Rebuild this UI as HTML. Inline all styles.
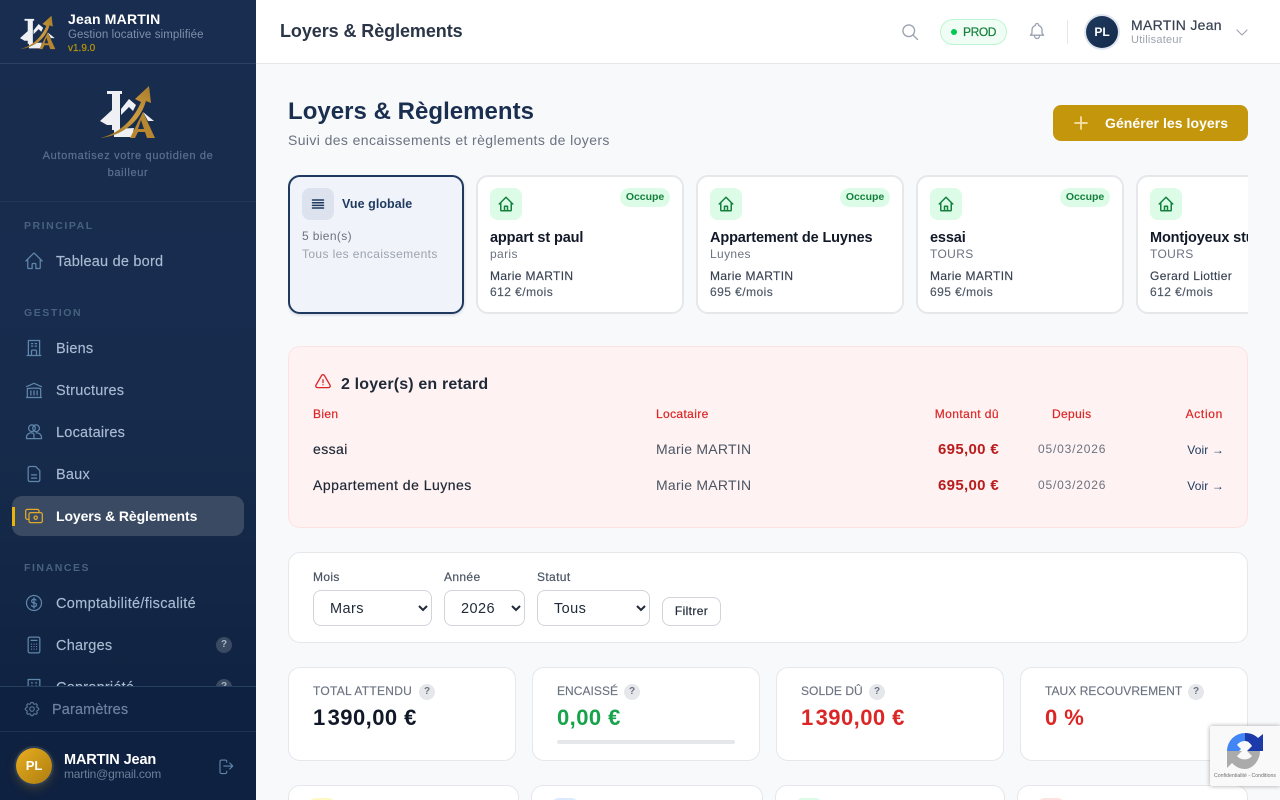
<!DOCTYPE html>
<html lang="fr"><head><meta charset="utf-8"><title>Loyers &amp; Règlements</title>
<style>
*{box-sizing:border-box}
html,body{margin:0;padding:0;width:1280px;height:800px;overflow:hidden;background:#f8f9fb;font-family:"Liberation Sans",sans-serif}
#root{position:relative;width:1280px;height:800px;overflow:hidden;background:#f8f9fb}
.t{position:absolute;white-space:nowrap;line-height:20px;height:20px;letter-spacing:.03em}
.r{text-align:right}
.b{position:absolute}
.m{-webkit-text-stroke:.2px currentColor}
svg{position:absolute;fill:none;stroke:currentColor;stroke-linecap:round;stroke-linejoin:round}
svg.logo{stroke:none}
#side{position:absolute;left:0;top:0;width:256px;height:800px;background:linear-gradient(180deg,#182d4f 0%,#172c4d 50%,#0e1f3d 100%);overflow:hidden}
#side .nav{color:#a9bbd2;font-size:14.5px;letter-spacing:.22px;-webkit-text-stroke:.15px currentColor}
#side .sec{color:#47617f;font-size:10.5px;font-weight:bold;letter-spacing:1.55px}
#side svg.i{color:#5f86ab;width:20px;height:20px;left:24px;stroke-width:1.5}
.help{position:absolute;width:16px;height:16px;border-radius:50%;text-align:center;font-size:10px;line-height:16px;font-weight:bold}
.card{position:absolute;top:175px;height:139px;width:208px;background:#fff;border:2px solid #e5e7eb;border-radius:12px}
.ci{position:absolute;top:11px;left:12px;width:32px;height:32px;border-radius:8px;background:#dcfce7;color:#15803d}
.ci svg{left:7px;top:7px;width:18px;height:18px;stroke-width:2}
.bd{position:absolute;top:11px;right:12px;width:50px;height:19px;border-radius:10px;background:#dcfce7;color:#15803d;font-size:10.5px;font-weight:bold;line-height:19px;text-align:center;letter-spacing:-.05px}
.c1{left:12px;top:51px;font-size:14.5px;font-weight:bold;color:#111827;letter-spacing:-.13px}
.c2{left:12px;top:67px;font-size:12px;color:#6b7280}
.c3{left:12px;top:89px;font-size:12px;color:#374151;-webkit-text-stroke:.15px currentColor}
.c4{left:12px;top:105px;font-size:12px;color:#4b5563;letter-spacing:.45px;-webkit-text-stroke:.15px currentColor}
.kpi{position:absolute;top:667px;height:94px;width:228px;background:#fff;border:1px solid #e5e7eb;border-radius:12px}
.kl{left:24px;top:13px;font-size:12px;color:#6b7280;letter-spacing:.05px;-webkit-text-stroke:.15px currentColor}
.kv{left:24px;top:40px;font-size:22px;font-weight:bold;line-height:20px;letter-spacing:.45px}
.kq{background:#e5e7eb;color:#6b7280;top:16px}
.th{letter-spacing:-4.2px}
select{position:absolute;top:590px;height:36px;background:#fff;border:1px solid #d1d5db;border-radius:8px;font:14.5px "Liberation Sans",sans-serif;color:#1f2937;padding:2px 0 0 12px;letter-spacing:.03em}
.bot{position:absolute;top:785px;height:40px;background:#fff;border:1px solid #e5e7eb;border-radius:12px}
.bot i{position:absolute;left:19px;top:12px;width:28px;height:28px;border-radius:8px}
</style></head><body>
<div id="root">
<div id="side">
<svg class="logo" style="left:20px;top:15px;width:36px;height:36px" viewBox="0 0 56 56"><defs><linearGradient id="g1" x1="0" y1="1" x2="1" y2="0"><stop offset="0" stop-color="#96701f"/><stop offset=".55" stop-color="#cf9c40"/><stop offset="1" stop-color="#a87c2a"/></linearGradient></defs><path fill="#eef0f4" d="M7 6h15v3h-2v36h-8V9H7zM0 36l12-11v15H7zM21 24l8-10 7 6-3 6-4-4-8 8zM43 27l11 9h-6zM14 44l20-1-2 9H14z"/><path fill="url(#g1)" d="M0 53C18 49 33 36 41 17l-6-3L49 1l2 17-5-2C40 37 22 51 0 53z"/><path fill="#b8862f" d="M43 27l12 26H47l-2-6h-7l-3 6h-5zM41 35l-3 9h6z"/></svg>
<div class="t" style="left:68px;top:9px;font-size:14px;font-weight:bold;color:#fff;letter-spacing:.2px">Jean MARTIN</div>
<div class="t" style="left:68px;top:25px;font-size:11.5px;color:#7e90aa;letter-spacing:.1px">Gestion locative simplifiée</div>
<div class="t" style="left:68px;top:39px;font-size:10px;color:#b8960c;letter-spacing:0;-webkit-text-stroke:.2px currentColor">v1.9.0</div>
<div class="b" style="left:0;top:63px;width:256px;height:1px;background:#2b4264"></div>
<svg class="logo" style="left:100px;top:85px;width:56px;height:56px" viewBox="0 0 56 56"><defs><linearGradient id="g2" x1="0" y1="1" x2="1" y2="0"><stop offset="0" stop-color="#96701f"/><stop offset=".55" stop-color="#cf9c40"/><stop offset="1" stop-color="#a87c2a"/></linearGradient></defs><path fill="#eef0f4" d="M7 6h15v3h-2v36h-8V9H7zM0 36l12-11v15H7zM21 24l8-10 7 6-3 6-4-4-8 8zM43 27l11 9h-6zM14 44l20-1-2 9H14z"/><path fill="url(#g2)" d="M0 53C18 49 33 36 41 17l-6-3L49 1l2 17-5-2C40 37 22 51 0 53z"/><path fill="#b8862f" d="M43 27l12 26H47l-2-6h-7l-3 6h-5zM41 35l-3 9h6z"/></svg>
<div class="t m" style="left:0;width:256px;text-align:center;top:146px;font-size:11px;color:#5b7090;letter-spacing:.66px">Automatisez votre quotidien de</div>
<div class="t m" style="left:0;width:256px;text-align:center;top:163px;font-size:11px;color:#5b7090;letter-spacing:.66px">bailleur</div>
<div class="b" style="left:0;top:201px;width:256px;height:1px;background:#20375a"></div>

<div class="t sec" style="left:24px;top:216px">PRINCIPAL</div>
<svg class="i" style="top:251px" viewBox="0 0 24 24"><path d="M2.25 12l8.954-8.955c.44-.439 1.152-.439 1.591 0L21.75 12M4.5 9.75v10.125c0 .621.504 1.125 1.125 1.125H9.75v-4.875c0-.621.504-1.125 1.125-1.125h2.25c.621 0 1.125.504 1.125 1.125V21h4.125c.621 0 1.125-.504 1.125-1.125V9.75"/></svg>
<div class="t nav" style="left:56px;top:252px">Tableau de bord</div>

<div class="t sec" style="left:24px;top:303px">GESTION</div>
<svg class="i" style="top:338px" viewBox="0 0 24 24"><path d="M3.75 21h16.5M5.25 3h13.5v18M5.25 3v18M9 6.75h1.5m-1.5 3h1.5m3-3H15m-1.5 3H15M9 21v-5.4c0-.6.5-1.1 1.1-1.1h3.8c.6 0 1.1.5 1.1 1.1V21"/></svg>
<div class="t nav" style="left:56px;top:339px">Biens</div>
<svg class="i" style="top:380px" viewBox="0 0 24 24"><path d="M12 18v-5M15.75 18v-5M8.25 18v-5M3 8l9-4 9 4M20 21V10.3A48 48 0 0012 9.8c-2.6 0-5.1.2-8 .5V21M3 21h18"/></svg>
<div class="t nav" style="left:56px;top:381px">Structures</div>
<svg class="i" style="top:422px" viewBox="0 0 24 24"><circle cx="9.5" cy="7.5" r="4"/><circle cx="14.5" cy="7.5" r="4"/><path d="M3 20v-1.500c0-3 2.500-5.500 5.500-5.500h1c2 0 2.500 1.500 2.500 3v4zM12 20h9v-1.500c0-3-2.500-5.500-5.500-5.500h-1"/></svg>
<div class="t nav" style="left:56px;top:423px">Locataires</div>
<svg class="i" style="top:464px" viewBox="0 0 24 24"><path d="M9 13h6m-6 4h6M7 3h7l5 5v11a2 2 0 01-2 2H7a2 2 0 01-2-2V5a2 2 0 012-2z"/></svg>
<div class="t nav" style="left:56px;top:465px">Baux</div>

<div class="b" style="left:12px;top:496px;width:232px;height:40px;border-radius:10px;background:#3a4a63"></div>
<div class="b" style="left:12px;top:507px;width:3px;height:19px;background:#eab308"></div>
<svg class="i" style="top:506px;color:#e0a92a" viewBox="0 0 24 24"><rect x="2" y="4" width="16" height="12" rx="2"/><rect x="6" y="8" width="16" height="12" rx="2" fill="#3a4a63"/><circle cx="14" cy="14" r="2"/></svg>
<div class="t" style="left:56px;top:506px;font-size:14px;font-weight:bold;color:#fff;letter-spacing:-.1px">Loyers &amp; Règlements</div>

<div class="t sec" style="left:24px;top:558px">FINANCES</div>
<svg class="i" style="top:593px" viewBox="0 0 24 24"><path d="M12 6v12m-3-2.818l.879.659c1.171.879 3.07.879 4.242 0 1.172-.879 1.172-2.303 0-3.182C13.536 12.219 12.768 12 12 12c-.725 0-1.45-.22-2.003-.659-1.106-.879-1.106-2.303 0-3.182s2.9-.879 4.006 0l.415.33M21 12a9 9 0 11-18 0 9 9 0 0118 0z"/></svg>
<div class="t nav" style="left:56px;top:594px;letter-spacing:.32px">Comptabilité/fiscalité</div>
<svg class="i" style="top:635px" viewBox="0 0 24 24"><rect x="5" y="2.500" width="14" height="19" rx="2"/><path d="M8.500 6.500h7M9 11h.01M12 11h.01M15 11h.01M9 14h.01M12 14h.01M15 14h.01M9 17h.01M12 17h.01M15 17h.01"/></svg>
<div class="t nav" style="left:56px;top:636px">Charges</div>
<div class="help" style="left:216px;top:637px;background:#3a4a63;color:#a9b5c6">?</div>
<svg class="i" style="top:677px" viewBox="0 0 24 24"><path d="M5 21V3h14v18M9 7h1m4 0h1M9 11h1m4 0h1"/></svg>
<div class="t nav" style="left:56px;top:678px">Copropriété</div>
<div class="help" style="left:216px;top:679px;background:#3a4a63;color:#a9b5c6">?</div>

<div class="b" style="left:0;top:686px;width:256px;height:114px;background:#0f2140;border-top:1px solid #28405f"></div>
<svg class="i" style="top:700px;color:#5d7a99;width:18px;height:18px;left:23px" viewBox="0 0 24 24"><path d="M10.325 4.317c.426-1.756 2.924-1.756 3.35 0a1.724 1.724 0 002.573 1.066c1.543-.94 3.31.826 2.37 2.37a1.724 1.724 0 001.065 2.572c1.756.426 1.756 2.924 0 3.35a1.724 1.724 0 00-1.066 2.573c.94 1.543-.826 3.31-2.37 2.37a1.724 1.724 0 00-2.572 1.065c-.426 1.756-2.924 1.756-3.35 0a1.724 1.724 0 00-2.573-1.066c-1.543.94-3.31-.826-2.37-2.37a1.724 1.724 0 00-1.065-2.572c-1.756-.426-1.756-2.924 0-3.35a1.724 1.724 0 001.066-2.573c-.94-1.543.826-3.31 2.37-2.37.996.608 2.296.07 2.572-1.065z"/><circle cx="12" cy="12" r="3"/></svg>
<div class="t m" style="left:52px;top:700px;font-size:14.5px;color:#6c819f;letter-spacing:.13px">Paramètres</div>
<div class="b" style="left:0;top:731px;width:256px;height:1px;background:#1e3352"></div>
<div class="b" style="left:16px;top:748px;width:36px;height:36px;border-radius:50%;background:linear-gradient(135deg,#e8ad20,#ad7e0f);box-shadow:0 0 0 2px #2c3c55,0 4px 10px rgba(212,160,23,.25);color:#fff;font-size:13px;font-weight:bold;text-align:center;line-height:36px">PL</div>
<div class="t" style="left:64px;top:750px;font-size:14.5px;font-weight:bold;color:#fff;letter-spacing:-.12px">MARTIN Jean</div>
<div class="t" style="left:64px;top:764px;font-size:12px;color:#688099;letter-spacing:-.2px">martin@gmail.com</div>
<svg class="i" style="left:217px;top:757px;width:18px;height:18px;color:#5f86ab" viewBox="0 0 24 24"><path d="M17 16l4-4m0 0l-4-4m4 4H9m4 7v1a2 2 0 01-2 2H6a2 2 0 01-2-2V6a2 2 0 012-2h5a2 2 0 012 2v1"/></svg>
</div>

<!-- Topbar -->
<div class="b" style="left:256px;top:0;width:1024px;height:64px;background:#fff;border-bottom:1px solid #e5e7eb"></div>
<div class="t" style="left:280px;top:21px;font-size:18px;font-weight:bold;color:#2a3547;letter-spacing:-.08px">Loyers &amp; Règlements</div>
<svg style="left:900px;top:22px;width:20px;height:20px;color:#9ca3af;stroke-width:1.6" viewBox="0 0 24 24"><circle cx="10.500" cy="10.500" r="7"/><path d="M21 21l-5.500-5.500"/></svg>
<div class="b" style="left:940px;top:19px;width:67px;height:26px;border-radius:13px;background:#f0fdf4;border:1px solid #bbf7d0"></div>
<div class="b" style="left:951px;top:29px;width:6px;height:6px;border-radius:50%;background:#00c853"></div>
<div class="t m" style="left:963px;top:22px;font-size:12px;color:#15803d;letter-spacing:-.4px">PROD</div>
<svg style="left:1027px;top:21px;width:20px;height:20px;color:#9ca3af;stroke-width:1.6" viewBox="0 0 24 24"><path d="M15 17h5l-1.405-1.405A2.032 2.032 0 0118 14.158V11a6.002 6.002 0 00-4-5.659V5a2 2 0 10-4 0v.341C7.670 6.165 6 8.388 6 11v3.159c0 .538-.214 1.055-.595 1.436L4 17h5m6 0v1a3 3 0 11-6 0v-1m6 0H9"/></svg>
<div class="b" style="left:1067px;top:20px;width:1px;height:24px;background:#e5e7eb"></div>
<div class="b" style="left:1086px;top:16px;width:32px;height:32px;border-radius:50%;background:linear-gradient(135deg,#1e3a5f,#152a4a);box-shadow:0 0 0 2px #dfe5ee;color:#fff;font-size:12px;font-weight:bold;text-align:center;line-height:32px">PL</div>
<div class="t m" style="left:1131px;top:15px;font-size:14px;color:#374151;letter-spacing:.29px">MARTIN Jean</div>
<div class="t" style="left:1131px;top:30px;font-size:11px;color:#9ca3af;letter-spacing:.25px">Utilisateur</div>
<svg style="left:1236px;top:26px;width:12px;height:12px;color:#9ca3af;stroke-width:2.2" viewBox="0 0 24 24"><path d="M2 8l10 10 10-10"/></svg>

<!-- Heading -->
<div class="t" style="left:288px;top:102px;font-size:24px;font-weight:bold;color:#1a2f50;letter-spacing:.03px">Loyers &amp; Règlements</div>
<div class="t" style="left:288px;top:130px;font-size:14px;color:#6b7280;letter-spacing:.39px">Suivi des encaissements et règlements de loyers</div>
<div class="b" style="left:1053px;top:105px;width:195px;height:36px;border-radius:8px;background:#c4960c"></div>
<svg style="left:1073px;top:115px;width:16px;height:16px;color:#f6e3ae;stroke-width:1.700" viewBox="0 0 16 16"><path d="M8 2v12M2 8h12"/></svg>
<div class="t" style="left:1105px;top:113px;font-size:14px;font-weight:bold;color:#fff;letter-spacing:.05px">Générer les loyers</div>

<!-- Cards -->
<div class="b" style="left:288px;top:175px;width:960px;height:142px;overflow:hidden">
<div class="card" style="left:0;top:0;width:176px;background:#f0f3f9;border-color:#1e3a5f;box-shadow:0 1px 3px rgba(30,58,95,.2)">
 <div class="ci" style="background:#dce3ee;color:#1e3a5f"><svg style="left:8px;top:8px;width:16px;height:16px;stroke-width:1.500" viewBox="0 0 16 16"><path d="M2.500 4h11M2.500 6.700h11M2.500 9.400h11M2.500 12h11"/></svg></div>
 <div class="t" style="left:52px;top:17px;font-size:12.5px;font-weight:bold;color:#1e3a5f;letter-spacing:.05px">Vue globale</div>
 <div class="t" style="left:12px;top:49px;font-size:12px;color:#6b7280">5 bien(s)</div>
 <div class="t" style="left:12px;top:67px;font-size:12px;color:#9ca3af;letter-spacing:.38px">Tous les encaissements</div>
</div>
<div class="card" style="left:188px;top:0">
 <div class="ci"><svg viewBox="0 0 24 24"><path d="M3 12l9-9 9 9M5 10v10a1 1 0 001 1h12a1 1 0 001-1V10M10 21v-6h4v6"/></svg></div><div class="bd">Occupe</div>
 <div class="t c1">appart st paul</div><div class="t c2">paris</div><div class="t c3">Marie MARTIN</div><div class="t c4">612 €/mois</div>
</div>
<div class="card" style="left:408px;top:0">
 <div class="ci"><svg viewBox="0 0 24 24"><path d="M3 12l9-9 9 9M5 10v10a1 1 0 001 1h12a1 1 0 001-1V10M10 21v-6h4v6"/></svg></div><div class="bd">Occupe</div>
 <div class="t c1">Appartement de Luynes</div><div class="t c2">Luynes</div><div class="t c3">Marie MARTIN</div><div class="t c4">695 €/mois</div>
</div>
<div class="card" style="left:628px;top:0">
 <div class="ci"><svg viewBox="0 0 24 24"><path d="M3 12l9-9 9 9M5 10v10a1 1 0 001 1h12a1 1 0 001-1V10M10 21v-6h4v6"/></svg></div><div class="bd">Occupe</div>
 <div class="t c1">essai</div><div class="t c2">TOURS</div><div class="t c3">Marie MARTIN</div><div class="t c4">695 €/mois</div>
</div>
<div class="card" style="left:848px;top:0">
 <div class="ci"><svg viewBox="0 0 24 24"><path d="M3 12l9-9 9 9M5 10v10a1 1 0 001 1h12a1 1 0 001-1V10M10 21v-6h4v6"/></svg></div><div class="bd">Occupe</div>
 <div class="t c1">Montjoyeux studio</div><div class="t c2">TOURS</div><div class="t c3">Gerard Liottier</div><div class="t c4">612 €/mois</div>
</div>
</div>

<!-- Alert -->
<div class="b" style="left:288px;top:346px;width:960px;height:182px;background:#fef2f2;border:1px solid #fee2e2;border-radius:12px"></div>
<svg style="left:314px;top:373px;width:18px;height:18px;color:#dc2626;stroke-width:1.800" viewBox="0 0 24 24"><path d="M12 9v3.750m-9.303 3.376c-.866 1.500.217 3.374 1.948 3.374h14.710c1.730 0 2.813-1.874 1.948-3.374L13.949 3.378c-.866-1.500-3.032-1.500-3.898 0L2.697 16.126zM12 15.750h.007v.008H12v-.008z"/></svg>
<div class="t" style="left:341px;top:375px;font-size:16px;font-weight:bold;color:#1f2937;letter-spacing:.01em">2 loyer(s) en retard</div>
<div class="t m" style="left:313px;top:404px;font-size:12px;color:#dc2626">Bien</div>
<div class="t m" style="left:656px;top:404px;font-size:12px;color:#dc2626">Locataire</div>
<div class="t r m" style="left:899px;width:100px;top:404px;font-size:12px;color:#dc2626;letter-spacing:.42px">Montant dû</div>
<div class="t m" style="left:1052px;top:404px;font-size:12px;color:#dc2626">Depuis</div>
<div class="t r m" style="left:1143px;width:80px;top:404px;font-size:12px;color:#dc2626;letter-spacing:.68px">Action</div>

<div class="t m" style="left:313px;top:439px;font-size:14px;color:#1f2937">essai</div>
<div class="t" style="left:656px;top:439px;font-size:14px;color:#4b5563;letter-spacing:.25px">Marie MARTIN</div>
<div class="t r" style="left:899px;width:100px;top:440px;font-size:15px;font-weight:bold;color:#b91c1c;letter-spacing:.33px">695,00 €</div>
<div class="t" style="left:1038px;top:439px;font-size:12px;color:#6b7280;letter-spacing:.82px">05/03/2026</div>
<div class="t r" style="left:1143px;width:81px;top:440px;font-size:12px;color:#1e3a5f;letter-spacing:.01em">Voir →</div>

<div class="t m" style="left:313px;top:475px;font-size:14px;color:#1f2937;letter-spacing:.48px">Appartement de Luynes</div>
<div class="t" style="left:656px;top:475px;font-size:14px;color:#4b5563;letter-spacing:.25px">Marie MARTIN</div>
<div class="t r" style="left:899px;width:100px;top:476px;font-size:15px;font-weight:bold;color:#b91c1c;letter-spacing:.33px">695,00 €</div>
<div class="t" style="left:1038px;top:475px;font-size:12px;color:#6b7280;letter-spacing:.82px">05/03/2026</div>
<div class="t r" style="left:1143px;width:81px;top:476px;font-size:12px;color:#1e3a5f;letter-spacing:.01em">Voir →</div>

<!-- Filters -->
<div class="b" style="left:288px;top:552px;width:960px;height:91px;background:#fff;border:1px solid #e5e7eb;border-radius:12px"></div>
<div class="t m" style="left:313px;top:567px;font-size:12px;color:#4b5563">Mois</div>
<div class="t m" style="left:444px;top:567px;font-size:12px;color:#4b5563">Année</div>
<div class="t m" style="left:537px;top:567px;font-size:12px;color:#4b5563">Statut</div>
<select style="left:313px;width:119px"><option>Mars</option></select>
<select style="left:444px;width:81px"><option>2026</option></select>
<select style="left:537px;width:113px"><option>Tous</option></select>
<div class="b m" style="left:662px;top:597px;width:59px;height:29px;background:#fff;border:1px solid #d1d5db;border-radius:8px;font-size:12px;color:#1f2937;text-align:center;line-height:27px;letter-spacing:.03em">Filtrer</div>

<!-- KPI -->
<div class="kpi" style="left:288px"><div class="t kl" style="letter-spacing:.27px">TOTAL ATTENDU</div><div class="help kq" style="left:130px">?</div><div class="t kv" style="color:#111827">1<span class="th"> </span>390,00 €</div></div>
<div class="kpi" style="left:532px"><div class="t kl">ENCAISSÉ</div><div class="help kq" style="left:91px">?</div><div class="t kv" style="color:#16a34a">0,00 €</div><div class="b" style="left:24px;top:72px;width:178px;height:4px;background:#e5e7eb;border-radius:2px"></div></div>
<div class="kpi" style="left:776px"><div class="t kl">SOLDE DÛ</div><div class="help kq" style="left:92px">?</div><div class="t kv" style="color:#dc2626">1<span class="th"> </span>390,00 €</div></div>
<div class="kpi" style="left:1020px"><div class="t kl">TAUX RECOUVREMENT</div><div class="help kq" style="left:167px">?</div><div class="t kv" style="color:#dc2626">0 %</div></div>

<div class="bot" style="left:288px;width:231px"><i style="background:#fef9c3"></i></div>
<div class="bot" style="left:531px;width:232px"><i style="background:#dbeafe"></i></div>
<div class="bot" style="left:775px;width:230px"><i style="background:#dcfce7"></i></div>
<div class="bot" style="left:1017px;width:231px"><i style="background:#fee2e2"></i></div>

<!-- reCAPTCHA -->
<div class="b" style="left:1210px;top:726px;width:70px;height:60px;background:#f9f9f9;border-radius:2px 0 0 2px;box-shadow:0 0 5px rgba(0,0,0,.35)"></div>
<svg class="logo" style="left:1226px;top:732px;width:38px;height:38px" viewBox="0 0 38 38"><path fill="#4285f4" d="M1 19A18 18 0 0 1 19 1V9A10 10 0 0 0 11 13L15 17L13 19z"/><path fill="#1c3aa9" d="M19 1C25 1 29 3 32 6L37 2V19H21L26 14C24 11 22 9 19 9z"/><path fill="#ababab" d="M1 19H16L11 24C14 28 22 29 26 24L21 19H34C34 28 27 37 19 37C13 37 9 34 6 31L1 36z"/></svg>
<div class="t" style="left:1210px;width:70px;text-align:center;top:766px;font-size:5.2px;color:#6f6f6f;letter-spacing:0">Confidentialité - Conditions</div>
</div>
</body></html>
